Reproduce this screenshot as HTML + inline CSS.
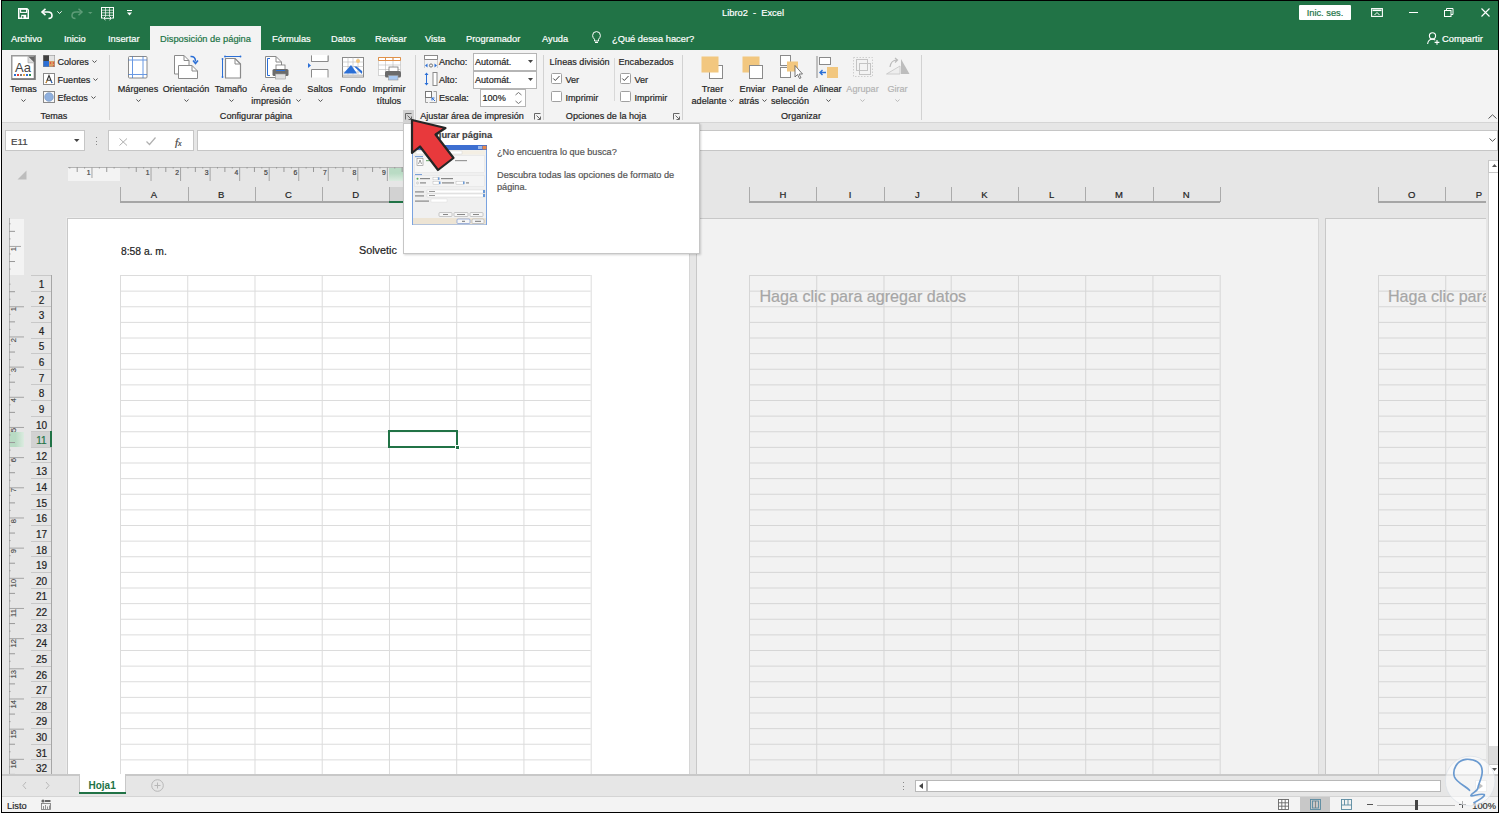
<!DOCTYPE html>
<html><head><meta charset="utf-8">
<style>
*{margin:0;padding:0;box-sizing:border-box}
html,body{width:1500px;height:813px;overflow:hidden;background:#e6e6e6;font-family:"Liberation Sans",sans-serif;color:#262626;position:relative}
.a{position:absolute}
.t{position:absolute;white-space:nowrap;-webkit-text-stroke:0.2px currentColor}
svg{position:absolute;overflow:visible}
</style></head><body>
<div class="a" style="left:0px;top:0px;width:1500px;height:50px;background:#217346;"></div>
<div class="a" style="left:150px;top:26px;width:111px;height:24px;background:#f3f3f3;"></div>
<div class="t" style="left:722.00px;top:9.00px;font-size:9.3px;line-height:9.3px;color:#fff;font-weight:normal;">Libro2&nbsp; - &nbsp;Excel</div>
<div class="t" style="left:11.00px;top:35.00px;font-size:9.3px;line-height:9.3px;color:#fff;font-weight:normal;">Archivo</div>
<div class="t" style="left:64.00px;top:35.00px;font-size:9.3px;line-height:9.3px;color:#fff;font-weight:normal;">Inicio</div>
<div class="t" style="left:108.00px;top:35.00px;font-size:9.3px;line-height:9.3px;color:#fff;font-weight:normal;">Insertar</div>
<div class="t" style="left:272.00px;top:35.00px;font-size:9.3px;line-height:9.3px;color:#fff;font-weight:normal;">Fórmulas</div>
<div class="t" style="left:331.00px;top:35.00px;font-size:9.3px;line-height:9.3px;color:#fff;font-weight:normal;">Datos</div>
<div class="t" style="left:375.00px;top:35.00px;font-size:9.3px;line-height:9.3px;color:#fff;font-weight:normal;">Revisar</div>
<div class="t" style="left:425.00px;top:35.00px;font-size:9.3px;line-height:9.3px;color:#fff;font-weight:normal;">Vista</div>
<div class="t" style="left:466.00px;top:35.00px;font-size:9.3px;line-height:9.3px;color:#fff;font-weight:normal;">Programador</div>
<div class="t" style="left:542.00px;top:35.00px;font-size:9.3px;line-height:9.3px;color:#fff;font-weight:normal;">Ayuda</div>
<div class="t" style="left:612.00px;top:35.00px;font-size:9.3px;line-height:9.3px;color:#fff;font-weight:normal;">¿Qué desea hacer?</div>
<div class="t" style="left:160.00px;top:35.00px;font-size:9.3px;line-height:9.3px;color:#217346;font-weight:normal;">Disposición de página</div>
<div class="t" style="left:1442.00px;top:35.00px;font-size:9.3px;line-height:9.3px;color:#fff;font-weight:normal;">Compartir</div>
<div class="a" style="left:0px;top:50px;width:1500px;height:72px;background:#f3f3f3;"></div>
<div class="a" style="left:0px;top:122px;width:1500px;height:1px;background:#d5d5d5;"></div>
<svg style="left:11px;top:55px;" width="25" height="25" viewBox="0 0 25 25"><rect x="0.75" y="0.75" width="23.5" height="23.5" fill="#fff" stroke="#9a9a9a" stroke-width="1.5"/><path d="M23.5 1 V24 H1" stroke="#777" stroke-width="1.5" fill="none"/><path d="M17 1.5 L23.3 7.8 L23.3 1.5 Z" fill="#666"/><path d="M17 1.5 V7.8 H23.3" fill="#ddd" stroke="#999" stroke-width="0.6"/><text x="4" y="17" font-family="Liberation Sans" font-size="13" fill="#444">Aa</text><rect x="3" y="19" width="2" height="2" fill="#2b6fd6"/><rect x="6" y="19" width="2" height="2" fill="#e0413a"/><rect x="9" y="19" width="2" height="2" fill="#7a7a7a"/><rect x="12" y="19" width="2" height="2" fill="#f0a848"/><rect x="15" y="19" width="2" height="2" fill="#2b6fd6"/><rect x="18" y="19" width="2" height="2" fill="#2a8a4a"/></svg>
<div class="t" style="left:23.50px;top:85.00px;font-size:9.1px;line-height:9.1px;color:#262626;font-weight:normal;transform:translateX(-50%);">Temas</div>
<svg style="left:21.0px;top:98.5px;" width="5" height="3" viewBox="0 0 5 3"><path d="M0.4 0.5 L2.5 2.5 L4.6 0.5" fill="none" stroke="#555" stroke-width="1"/></svg>
<svg style="left:43px;top:55px;" width="12" height="12" viewBox="0 0 12 12"><rect x="0" y="0" width="6" height="6" fill="#404040"/><rect x="6" y="0" width="6" height="6" fill="#e3e3e3"/><rect x="0" y="6" width="6" height="6" fill="#2b6fd6"/><rect x="6" y="6" width="6" height="6" fill="#d9a066"/><circle cx="7.5" cy="8" r="0.7" fill="#e03030"/><circle cx="10.5" cy="8" r="0.7" fill="#e03030"/><circle cx="10.5" cy="11" r="0.7" fill="#e03030"/><rect x="0.25" y="0.25" width="11.5" height="11.5" fill="none" stroke="#888" stroke-width="0.5"/></svg>
<div class="t" style="left:57.50px;top:58.00px;font-size:9.1px;line-height:9.1px;color:#262626;font-weight:normal;">Colores</div>
<svg style="left:91.5px;top:60.0px;" width="5" height="3" viewBox="0 0 5 3"><path d="M0.4 0.5 L2.5 2.5 L4.6 0.5" fill="none" stroke="#555" stroke-width="1"/></svg>
<svg style="left:43px;top:73px;" width="12" height="12" viewBox="0 0 12 12"><rect x="0.5" y="0.5" width="11" height="11" fill="#fff" stroke="#8a8a8a" stroke-width="1"/><path d="M3 10 L6 2.5 L9 10 M4.2 7.3 H7.8" fill="none" stroke="#333" stroke-width="1.1"/><path d="M3 10 L4 7.5" stroke="#f0a030" stroke-width="1"/><path d="M9 10 L8 7.5" stroke="#2b6fd6" stroke-width="1"/></svg>
<div class="t" style="left:57.50px;top:76.00px;font-size:9.1px;line-height:9.1px;color:#262626;font-weight:normal;">Fuentes</div>
<svg style="left:92.5px;top:78.0px;" width="5" height="3" viewBox="0 0 5 3"><path d="M0.4 0.5 L2.5 2.5 L4.6 0.5" fill="none" stroke="#555" stroke-width="1"/></svg>
<svg style="left:43px;top:91px;" width="12" height="12" viewBox="0 0 12 12"><rect x="0.5" y="0.5" width="11" height="11" fill="#f8f8f8" stroke="#8a8a8a" stroke-width="1"/><circle cx="6" cy="6" r="4.3" fill="#8fb0de" stroke="#6f90be" stroke-width="0.6"/></svg>
<div class="t" style="left:57.50px;top:94.00px;font-size:9.1px;line-height:9.1px;color:#262626;font-weight:normal;">Efectos</div>
<svg style="left:90.5px;top:96.0px;" width="5" height="3" viewBox="0 0 5 3"><path d="M0.4 0.5 L2.5 2.5 L4.6 0.5" fill="none" stroke="#555" stroke-width="1"/></svg>
<div class="t" style="left:54.00px;top:112.00px;font-size:9.1px;line-height:9.1px;color:#262626;font-weight:normal;transform:translateX(-50%);">Temas</div>
<div class="a" style="left:109px;top:55px;width:1px;height:65px;background:#d2d2d2;"></div>
<svg style="left:128px;top:56px;" width="20" height="23" viewBox="0 0 20 23"><rect x="0.5" y="0.5" width="18.5" height="21.5" fill="#fff" stroke="#8a8a8a" stroke-width="1" rx="1"/><path d="M4.5 0.5 V22 M15 0.5 V22 M0.5 4 H19 M0.5 18.5 H19" stroke="#2b6fd6" stroke-width="1" opacity="0.7"/></svg>
<div class="t" style="left:138.00px;top:85.00px;font-size:9.1px;line-height:9.1px;color:#262626;font-weight:normal;transform:translateX(-50%);">Márgenes</div>
<svg style="left:135.5px;top:98.5px;" width="5" height="3" viewBox="0 0 5 3"><path d="M0.4 0.5 L2.5 2.5 L4.6 0.5" fill="none" stroke="#555" stroke-width="1"/></svg>
<svg style="left:174px;top:55px;" width="25" height="25" viewBox="0 0 25 25"><path d="M0.5 0.5 H10 L15 5.5 V19 H0.5 Z" fill="#fff" stroke="#8a8a8a" stroke-width="1"/><path d="M4.5 10.5 H18 L23.5 16 V23.5 H4.5 Z" fill="#fff" stroke="#8a8a8a" stroke-width="1"/><path d="M18 10.5 V16 H23.5" fill="none" stroke="#8a8a8a" stroke-width="1"/><path d="M10 0.5 V5.5 H15" fill="none" stroke="#8a8a8a" stroke-width="1"/><path d="M16.5 1.5 Q21.5 1 21.5 6.5" fill="none" stroke="#2b6fd6" stroke-width="1.5"/><path d="M19 5.5 L21.5 8.5 L24 5.5" fill="none" stroke="#2b6fd6" stroke-width="1.5"/></svg>
<div class="t" style="left:186.00px;top:85.00px;font-size:9.1px;line-height:9.1px;color:#262626;font-weight:normal;transform:translateX(-50%);">Orientación</div>
<svg style="left:183.5px;top:98.5px;" width="5" height="3" viewBox="0 0 5 3"><path d="M0.4 0.5 L2.5 2.5 L4.6 0.5" fill="none" stroke="#555" stroke-width="1"/></svg>
<svg style="left:221px;top:55px;" width="22" height="24" viewBox="0 0 22 24"><path d="M4.5 3.5 H14 L19.5 9 V23 H4.5 Z" fill="#fff" stroke="#8a8a8a" stroke-width="1.2" stroke-linejoin="round"/><path d="M14 3.5 V9 H19.5" fill="none" stroke="#8a8a8a" stroke-width="1"/><path d="M4 1.5 H19.5 M1.5 4 V22" stroke="#2b6fd6" stroke-width="1"/><circle cx="4" cy="1.5" r="0.9" fill="#2b6fd6"/><circle cx="19.5" cy="1.5" r="0.9" fill="#2b6fd6"/><circle cx="1.5" cy="4" r="0.9" fill="#2b6fd6"/><circle cx="1.5" cy="22" r="0.9" fill="#2b6fd6"/></svg>
<div class="t" style="left:231.00px;top:85.00px;font-size:9.1px;line-height:9.1px;color:#262626;font-weight:normal;transform:translateX(-50%);">Tamaño</div>
<svg style="left:228.5px;top:98.5px;" width="5" height="3" viewBox="0 0 5 3"><path d="M0.4 0.5 L2.5 2.5 L4.6 0.5" fill="none" stroke="#555" stroke-width="1"/></svg>
<svg style="left:265px;top:56px;" width="25" height="24" viewBox="0 0 25 24"><path d="M0.5 0.5 H11 L16.5 6 V21.5 H0.5 Z" fill="#fff" stroke="#8a8a8a" stroke-width="1"/><path d="M11 0.5 V6 H16.5" fill="none" stroke="#8a8a8a" stroke-width="1"/><path d="M5 2.5 H2.5 V19.5 H5" fill="none" stroke="#2b6fd6" stroke-width="1"/><rect x="11" y="9" width="9" height="5" fill="#fff" stroke="#777" stroke-width="0.8"/><rect x="7.5" y="13" width="16" height="7" rx="1.5" fill="#6b6b6b"/><rect x="10.5" y="18" width="10" height="5" fill="#e0e0e0" stroke="#999" stroke-width="0.6"/><rect x="11" y="14" width="9" height="1" fill="#2b6fd6"/></svg>
<div class="t" style="left:276.50px;top:85.00px;font-size:9.1px;line-height:9.1px;color:#262626;font-weight:normal;transform:translateX(-50%);">Área de</div>
<div class="t" style="left:271.00px;top:97.00px;font-size:9.1px;line-height:9.1px;color:#262626;font-weight:normal;transform:translateX(-50%);">impresión</div>
<svg style="left:295.5px;top:99.0px;" width="5" height="3" viewBox="0 0 5 3"><path d="M0.4 0.5 L2.5 2.5 L4.6 0.5" fill="none" stroke="#555" stroke-width="1"/></svg>
<svg style="left:308px;top:55px;" width="21" height="24" viewBox="0 0 21 24"><path d="M3.5 0.5 V6.5 H20 V0.5" fill="#fff" stroke="#8a8a8a" stroke-width="1"/><path d="M3.5 22.5 V14.5 H20 V22.5" fill="#fff" stroke="#8a8a8a" stroke-width="1"/><rect x="3.5" y="0" width="16.5" height="6.5" fill="#fff"/><path d="M3.5 0.5 V6.5 H20 V0.5" fill="none" stroke="#8a8a8a" stroke-width="1"/><path d="M0 8 L3 10.5 L0 13 Z" fill="#2b6fd6"/></svg>
<div class="t" style="left:320.00px;top:85.00px;font-size:9.1px;line-height:9.1px;color:#262626;font-weight:normal;transform:translateX(-50%);">Saltos</div>
<svg style="left:317.5px;top:99.0px;" width="5" height="3" viewBox="0 0 5 3"><path d="M0.4 0.5 L2.5 2.5 L4.6 0.5" fill="none" stroke="#555" stroke-width="1"/></svg>
<svg style="left:342px;top:57px;" width="22" height="21" viewBox="0 0 22 21"><rect x="0.5" y="0.5" width="21" height="19.5" fill="#fff" stroke="#8a8a8a" stroke-width="1"/><path d="M0.5 5 H21.5 M0.5 9.5 H21.5 M0.5 15 H21.5 M6 0.5 V20 M11 0.5 V20 M16 0.5 V20" stroke="#bbb" stroke-width="0.6"/><path d="M1.5 16.5 L9 8 L15 16.5 Z" fill="#2b6fd6"/><path d="M12 9.5 L20 17 V14 L14.5 9.5 Z" fill="#2b6fd6"/><circle cx="16" cy="4" r="2" fill="#f2c77f"/><rect x="1" y="17.5" width="20" height="2.5" fill="#ccc"/></svg>
<div class="t" style="left:353.00px;top:85.00px;font-size:9.1px;line-height:9.1px;color:#262626;font-weight:normal;transform:translateX(-50%);">Fondo</div>
<svg style="left:378px;top:57px;" width="24" height="23" viewBox="0 0 24 23"><rect x="0.5" y="0.5" width="22" height="18" fill="#fff" stroke="#bbb" stroke-width="0.6"/><path d="M0.5 3.5 H22.5 M7.5 0.5 V18 M15 0.5 V18 M0.5 8 H22.5 M0.5 12.5 H22.5" stroke="#bbb" stroke-width="0.6"/><path d="M0.5 0.5 H22.5 V3.5 H0.5 Z M7.5 0.5 V3.5 M15 0.5 V3.5" fill="none" stroke="#e0924a" stroke-width="1"/><rect x="11" y="10" width="9" height="5" fill="#fff" stroke="#777" stroke-width="0.8"/><rect x="7" y="14" width="16" height="6.5" rx="1.5" fill="#6b6b6b"/><rect x="10.5" y="18.5" width="9.5" height="4.5" fill="#a8c8f0" stroke="#999" stroke-width="0.6"/></svg>
<div class="t" style="left:389.00px;top:85.00px;font-size:9.1px;line-height:9.1px;color:#262626;font-weight:normal;transform:translateX(-50%);">Imprimir</div>
<div class="t" style="left:389.00px;top:97.00px;font-size:9.1px;line-height:9.1px;color:#262626;font-weight:normal;transform:translateX(-50%);">títulos</div>
<div class="t" style="left:256.00px;top:112.00px;font-size:9.1px;line-height:9.1px;color:#262626;font-weight:normal;transform:translateX(-50%);">Configurar página</div>
<div class="a" style="left:403px;top:110px;width:11px;height:12px;background:#d2d2d2;"></div>
<svg style="left:405px;top:113px;" width="7" height="7" viewBox="0 0 7 7"><path d="M0.5 6.5 V0.5 H6.5" fill="none" stroke="#666" stroke-width="1"/><path d="M2.5 2.5 L6 6 M6.5 3.5 V6.5 H3.5" fill="none" stroke="#666" stroke-width="1"/></svg>
<div class="a" style="left:415px;top:55px;width:1px;height:65px;background:#d2d2d2;"></div>
<svg style="left:424px;top:55px;" width="14" height="14" viewBox="0 0 14 14"><rect x="0.5" y="0.5" width="13" height="4" fill="#fff" stroke="#8a8a8a" stroke-width="1"/><path d="M0.5 4.5 V13 M13.5 4.5 V13" stroke="#bbb" stroke-width="0.7"/><path d="M1 10.5 L3.5 8.5 V12.5 Z M13 10.5 L10.5 8.5 V12.5 Z" fill="#2b6fd6"/><circle cx="7" cy="10.5" r="1.6" fill="none" stroke="#555" stroke-width="0.8"/></svg>
<div class="t" style="left:439.00px;top:58.00px;font-size:9.1px;line-height:9.1px;color:#262626;font-weight:normal;">Ancho:</div>
<div class="a" style="left:473px;top:53px;width:64px;height:18px;background:#fff;border:1px solid #b5b5b5"></div>
<div class="t" style="left:475.00px;top:58.00px;font-size:9.1px;line-height:9.1px;color:#262626;font-weight:normal;">Automát.</div>
<svg style="left:528px;top:60px;" width="5" height="3" viewBox="0 0 5 3"><path d="M0 0 H5 L2.5 3 Z" fill="#444"/></svg>
<svg style="left:424px;top:72px;" width="14" height="14" viewBox="0 0 14 14"><path d="M2.5 0.5 L0.5 3 H4.5 Z M2.5 13.5 L0.5 11 H4.5 Z" fill="#2b6fd6"/><path d="M2.5 2 V12" stroke="#2b6fd6" stroke-width="1"/><rect x="9" y="0.5" width="4" height="13" fill="#fff" stroke="#8a8a8a" stroke-width="1"/></svg>
<div class="t" style="left:439.00px;top:76.00px;font-size:9.1px;line-height:9.1px;color:#262626;font-weight:normal;">Alto:</div>
<div class="a" style="left:473px;top:71px;width:64px;height:18px;background:#fff;border:1px solid #b5b5b5"></div>
<div class="t" style="left:475.00px;top:76.00px;font-size:9.1px;line-height:9.1px;color:#262626;font-weight:normal;">Automát.</div>
<svg style="left:528px;top:78px;" width="5" height="3" viewBox="0 0 5 3"><path d="M0 0 H5 L2.5 3 Z" fill="#444"/></svg>
<svg style="left:425px;top:91px;" width="12" height="12" viewBox="0 0 12 12"><rect x="0.5" y="0.5" width="6" height="6" fill="#fff" stroke="#777" stroke-width="1"/><path d="M4.5 11.5 H11.5 V0.5 H8.5" fill="none" stroke="#8a8a8a" stroke-width="0.8"/><path d="M0.5 7 V11.5 H3" fill="none" stroke="#8a8a8a" stroke-width="0.8"/><path d="M10 10 L7 7 M7 9.5 V7 H9.5" fill="none" stroke="#2b6fd6" stroke-width="1"/></svg>
<div class="t" style="left:439.00px;top:94.00px;font-size:9.1px;line-height:9.1px;color:#262626;font-weight:normal;">Escala:</div>
<div class="a" style="left:480px;top:89px;width:46px;height:18px;background:#fff;border:1px solid #b5b5b5"></div>
<div class="t" style="left:482.50px;top:94.00px;font-size:9.1px;line-height:9.1px;color:#262626;font-weight:normal;">100%</div>
<svg style="left:515px;top:92px;" width="7" height="12" viewBox="0 0 7 12"><path d="M0.5 3 L3.5 0.5 L6.5 3 M0.5 9 L3.5 11.5 L6.5 9" fill="none" stroke="#666" stroke-width="0.9"/></svg>
<div class="t" style="left:472.00px;top:112.00px;font-size:9.1px;line-height:9.1px;color:#262626;font-weight:normal;transform:translateX(-50%);">Ajustar área de impresión</div>
<svg style="left:534px;top:113px;" width="7" height="7" viewBox="0 0 7 7"><path d="M0.5 6.5 V0.5 H6.5" fill="none" stroke="#666" stroke-width="1"/><path d="M2.5 2.5 L6 6 M6.5 3.5 V6.5 H3.5" fill="none" stroke="#666" stroke-width="1"/></svg>
<div class="a" style="left:542.5px;top:55px;width:1px;height:65px;background:#d2d2d2;"></div>
<div class="t" style="left:549.50px;top:58.00px;font-size:9.1px;line-height:9.1px;color:#262626;font-weight:normal;">Líneas división</div>
<svg style="left:551px;top:73px;" width="11" height="11" viewBox="0 0 11 11"><rect x="0.5" y="0.5" width="10" height="10" rx="1" fill="#fff" stroke="#a0a0a0" stroke-width="1"/><path d="M2.3 5.5 L4.3 7.5 L8.5 3" fill="none" stroke="#444" stroke-width="1"/></svg>
<div class="t" style="left:565.50px;top:76.00px;font-size:9.1px;line-height:9.1px;color:#262626;font-weight:normal;">Ver</div>
<svg style="left:551px;top:91px;" width="11" height="11" viewBox="0 0 11 11"><rect x="0.5" y="0.5" width="10" height="10" rx="1" fill="#fff" stroke="#a0a0a0" stroke-width="1"/></svg>
<div class="t" style="left:565.50px;top:94.00px;font-size:9.1px;line-height:9.1px;color:#262626;font-weight:normal;">Imprimir</div>
<div class="a" style="left:614px;top:58px;width:1px;height:43px;background:#d8d8d8;"></div>
<div class="t" style="left:618.50px;top:58.00px;font-size:9.1px;line-height:9.1px;color:#262626;font-weight:normal;">Encabezados</div>
<svg style="left:620px;top:73px;" width="11" height="11" viewBox="0 0 11 11"><rect x="0.5" y="0.5" width="10" height="10" rx="1" fill="#fff" stroke="#a0a0a0" stroke-width="1"/><path d="M2.3 5.5 L4.3 7.5 L8.5 3" fill="none" stroke="#444" stroke-width="1"/></svg>
<div class="t" style="left:634.50px;top:76.00px;font-size:9.1px;line-height:9.1px;color:#262626;font-weight:normal;">Ver</div>
<svg style="left:620px;top:91px;" width="11" height="11" viewBox="0 0 11 11"><rect x="0.5" y="0.5" width="10" height="10" rx="1" fill="#fff" stroke="#a0a0a0" stroke-width="1"/></svg>
<div class="t" style="left:634.50px;top:94.00px;font-size:9.1px;line-height:9.1px;color:#262626;font-weight:normal;">Imprimir</div>
<div class="t" style="left:606.00px;top:112.00px;font-size:9.1px;line-height:9.1px;color:#262626;font-weight:normal;transform:translateX(-50%);">Opciones de la hoja</div>
<svg style="left:673px;top:113px;" width="7" height="7" viewBox="0 0 7 7"><path d="M0.5 6.5 V0.5 H6.5" fill="none" stroke="#666" stroke-width="1"/><path d="M2.5 2.5 L6 6 M6.5 3.5 V6.5 H3.5" fill="none" stroke="#666" stroke-width="1"/></svg>
<div class="a" style="left:682px;top:55px;width:1px;height:65px;background:#d2d2d2;"></div>
<svg style="left:701px;top:56px;" width="23" height="23" viewBox="0 0 23 23"><rect x="8.5" y="9.5" width="13" height="13" fill="#fff" stroke="#8a8a8a" stroke-width="1"/><rect x="0.5" y="0.5" width="17" height="16" fill="#f2c77f"/></svg>
<div class="t" style="left:712.50px;top:85.00px;font-size:9.1px;line-height:9.1px;color:#262626;font-weight:normal;transform:translateX(-50%);">Traer</div>
<div class="t" style="left:709.00px;top:97.00px;font-size:9.1px;line-height:9.1px;color:#262626;font-weight:normal;transform:translateX(-50%);">adelante</div>
<svg style="left:728.5px;top:99.0px;" width="5" height="3" viewBox="0 0 5 3"><path d="M0.4 0.5 L2.5 2.5 L4.6 0.5" fill="none" stroke="#555" stroke-width="1"/></svg>
<svg style="left:742px;top:56px;" width="23" height="23" viewBox="0 0 23 23"><rect x="0.5" y="0.5" width="17" height="16" fill="#f2c77f"/><rect x="7.5" y="9.5" width="13" height="13" fill="#fff" stroke="#8a8a8a" stroke-width="1"/></svg>
<div class="t" style="left:752.50px;top:85.00px;font-size:9.1px;line-height:9.1px;color:#262626;font-weight:normal;transform:translateX(-50%);">Enviar</div>
<div class="t" style="left:749.00px;top:97.00px;font-size:9.1px;line-height:9.1px;color:#262626;font-weight:normal;transform:translateX(-50%);">atrás</div>
<svg style="left:761.5px;top:99.0px;" width="5" height="3" viewBox="0 0 5 3"><path d="M0.4 0.5 L2.5 2.5 L4.6 0.5" fill="none" stroke="#555" stroke-width="1"/></svg>
<svg style="left:780px;top:55px;" width="23" height="25" viewBox="0 0 23 25"><rect x="0.5" y="0.5" width="10" height="10" fill="#fff" stroke="#8a8a8a" stroke-width="1"/><rect x="0.5" y="12.5" width="10" height="10" fill="#fff" stroke="#8a8a8a" stroke-width="1"/><rect x="7" y="6.5" width="11" height="10" fill="#f2c77f"/><path d="M15 10.5 V22 L17.5 19.5 L19.5 23.5 L21 22.8 L19 19 H22.5 Z" fill="#fff" stroke="#555" stroke-width="0.8"/></svg>
<div class="t" style="left:790.00px;top:85.00px;font-size:9.1px;line-height:9.1px;color:#262626;font-weight:normal;transform:translateX(-50%);">Panel de</div>
<div class="t" style="left:790.00px;top:97.00px;font-size:9.1px;line-height:9.1px;color:#262626;font-weight:normal;transform:translateX(-50%);">selección</div>
<svg style="left:816px;top:56px;" width="23" height="23" viewBox="0 0 23 23"><path d="M1 0 V22" stroke="#8a8a8a" stroke-width="1"/><rect x="3.5" y="1.5" width="11" height="7" fill="#fff" stroke="#8a8a8a" stroke-width="1"/><rect x="11" y="11" width="11" height="11" fill="#f2c77f"/><path d="M4 16.5 H10 M6.5 14 L4 16.5 L6.5 19" fill="none" stroke="#2b6fd6" stroke-width="1.4"/></svg>
<div class="t" style="left:827.50px;top:85.00px;font-size:9.1px;line-height:9.1px;color:#262626;font-weight:normal;transform:translateX(-50%);">Alinear</div>
<svg style="left:825.5px;top:99.0px;" width="5" height="3" viewBox="0 0 5 3"><path d="M0.4 0.5 L2.5 2.5 L4.6 0.5" fill="none" stroke="#555" stroke-width="1"/></svg>
<svg style="left:852px;top:56px;" width="22" height="23" viewBox="0 0 22 23"><rect x="1.5" y="1.5" width="19" height="19" fill="none" stroke="#c4c4c4" stroke-width="0.8" stroke-dasharray="1.5 1.5"/><rect x="4.5" y="3.5" width="11" height="11" fill="none" stroke="#c4c4c4" stroke-width="1"/><rect x="7.5" y="7.5" width="11" height="11" fill="none" stroke="#c4c4c4" stroke-width="1"/></svg>
<div class="t" style="left:862.50px;top:85.00px;font-size:9.1px;line-height:9.1px;color:#b3b3b3;font-weight:normal;transform:translateX(-50%);">Agrupar</div>
<svg style="left:860.0px;top:99.0px;" width="5" height="3" viewBox="0 0 5 3"><path d="M0.4 0.5 L2.5 2.5 L4.6 0.5" fill="none" stroke="#bbb" stroke-width="1"/></svg>
<svg style="left:886px;top:57px;" width="24" height="18" viewBox="0 0 24 18"><path d="M0.5 17 L14 9 V17 Z" fill="#eee" stroke="#c4c4c4" stroke-width="0.8"/><path d="M15 17 V2 L23.5 17 Z" fill="#bdbdbd"/><path d="M4 10 Q5 3 11 3 M9 1 L11.5 3 L9 5.5" fill="none" stroke="#bbb" stroke-width="1.2"/></svg>
<div class="t" style="left:897.50px;top:85.00px;font-size:9.1px;line-height:9.1px;color:#b3b3b3;font-weight:normal;transform:translateX(-50%);">Girar</div>
<svg style="left:895.0px;top:99.0px;" width="5" height="3" viewBox="0 0 5 3"><path d="M0.4 0.5 L2.5 2.5 L4.6 0.5" fill="none" stroke="#bbb" stroke-width="1"/></svg>
<div class="t" style="left:801.00px;top:112.00px;font-size:9.1px;line-height:9.1px;color:#262626;font-weight:normal;transform:translateX(-50%);">Organizar</div>
<div class="a" style="left:920.5px;top:55px;width:1px;height:65px;background:#d2d2d2;"></div>
<svg style="left:1488px;top:114px;" width="9" height="5" viewBox="0 0 9 5"><path d="M0.5 4.5 L4.5 0.8 L8.5 4.5" fill="none" stroke="#555" stroke-width="1"/></svg>
<svg style="left:18px;top:8px;" width="11" height="11" viewBox="0 0 11 11"><path d="M0.75 0.75 H9 L10.25 2 V10.25 H0.75 Z" fill="none" stroke="#fff" stroke-width="1.5"/><rect x="2.6" y="1.2" width="6" height="3.2" fill="none" stroke="#fff" stroke-width="1.1"/><rect x="3.2" y="6.8" width="5" height="3.4" fill="#fff"/><rect x="4.2" y="8" width="1.2" height="2.2" fill="#217346"/></svg>
<svg style="left:41px;top:8px;" width="12" height="11" viewBox="0 0 12 11"><path d="M1 4 H7 Q11 4 11 7.5 Q11 10.5 7.5 10.5" fill="none" stroke="#fff" stroke-width="1.6"/><path d="M4.5 0.8 L1 4 L4.5 7.2" fill="none" stroke="#fff" stroke-width="1.6"/></svg>
<svg style="left:57px;top:11px;" width="5" height="3" viewBox="0 0 5 3"><path d="M0.3 0.3 L2.5 2.5 L4.7 0.3" fill="none" stroke="#fff" stroke-width="0.9"/></svg>
<svg style="left:71px;top:8px;" width="12" height="11" viewBox="0 0 12 11"><path d="M11 4 H5 Q1 4 1 7.5 Q1 10.5 4.5 10.5" fill="none" stroke="#5e9c78" stroke-width="1.5"/><path d="M7.5 0.8 L11 4 L7.5 7.2" fill="none" stroke="#5e9c78" stroke-width="1.5"/></svg>
<svg style="left:88px;top:12px;" width="5" height="2" viewBox="0 0 5 2"><path d="M0 0 H4.5 L2.25 2 Z" fill="#5e9c78"/></svg>
<svg style="left:101px;top:7px;" width="13" height="13" viewBox="0 0 13 13"><rect x="0.5" y="0.5" width="12" height="10.5" fill="none" stroke="#fff" stroke-width="1"/><path d="M0.5 3.2 H12.5 M0.5 5.8 H12.5 M0.5 8.4 H12.5 M4.5 0.5 V11 M8.5 0.5 V11" stroke="#fff" stroke-width="0.7"/><rect x="2" y="9.5" width="9" height="3.5" fill="#217346"/><path d="M2.8 11.3 H10.2 M4.5 9.6 L2.6 11.3 L4.5 13 M8.5 9.6 L10.4 11.3 L8.5 13" fill="none" stroke="#fff" stroke-width="1"/></svg>
<svg style="left:127px;top:10px;" width="5" height="6" viewBox="0 0 5 6"><path d="M0 0.5 H5" stroke="#fff" stroke-width="1"/><path d="M0 2.5 H5 L2.5 5.5 Z" fill="#fff"/></svg>
<div class="a" style="left:1299px;top:5px;width:52px;height:15px;background:#fff;border-radius:1px"></div>
<div class="t" style="left:1325.00px;top:9.00px;font-size:9.3px;line-height:9.3px;color:#217346;font-weight:normal;transform:translateX(-50%);">Inic. ses.</div>
<svg style="left:1371px;top:8px;" width="12" height="9" viewBox="0 0 12 9"><rect x="0.6" y="0.6" width="10.8" height="7.8" fill="none" stroke="#fff" stroke-width="1.1"/><rect x="1.5" y="1.5" width="9" height="1.6" fill="#fff"/><path d="M3.5 7 L6 4.5 L8.5 7" fill="none" stroke="#fff" stroke-width="1"/></svg>
<div class="a" style="left:1409px;top:12px;width:9px;height:1px;background:#fff;"></div>
<svg style="left:1444px;top:8px;" width="10" height="9" viewBox="0 0 10 9"><rect x="0.5" y="2.5" width="6.5" height="6" fill="none" stroke="#fff" stroke-width="1"/><path d="M2.5 2.5 V0.5 H9 V6.5 H7" fill="none" stroke="#fff" stroke-width="1"/></svg>
<svg style="left:1481px;top:7.5px;" width="9" height="9" viewBox="0 0 9 9"><path d="M0.5 0.5 L8.5 8.5 M8.5 0.5 L0.5 8.5" stroke="#fff" stroke-width="1.1"/></svg>
<svg style="left:1427px;top:32px;" width="13" height="13" viewBox="0 0 13 13"><circle cx="5.5" cy="3.8" r="3.1" fill="none" stroke="#fff" stroke-width="1.1"/><path d="M0.6 12 Q1.2 7.3 5.5 7.3 Q7.3 7.3 8.3 8.2" fill="none" stroke="#fff" stroke-width="1.1"/><path d="M10 8 V12.8 M7.6 10.4 H12.4" stroke="#fff" stroke-width="1.1"/></svg>
<svg style="left:592px;top:31px;" width="9" height="13" viewBox="0 0 9 13"><path d="M4.5 0.6 Q8.4 0.6 8.4 4.5 Q8.4 6.5 6.5 8.3 V10 H2.5 V8.3 Q0.6 6.5 0.6 4.5 Q0.6 0.6 4.5 0.6 Z" fill="none" stroke="#fff" stroke-width="1"/><path d="M3 11.5 H6" stroke="#fff" stroke-width="1"/></svg>
<div class="a" style="left:5px;top:130px;width:80px;height:21px;background:#fff;border:1px solid #c6c6c6"></div>
<div class="t" style="left:11.00px;top:137.00px;font-size:9.8px;line-height:9.8px;color:#444;font-weight:normal;">E11</div>
<div class="a" style="left:108px;top:130px;width:86px;height:21px;background:#fff;border:1px solid #c6c6c6"></div>
<div class="a" style="left:197px;top:130px;width:1301px;height:21px;background:#fff;border:1px solid #c6c6c6"></div>
<svg style="left:74px;top:139px;" width="6" height="3" viewBox="0 0 6 3"><path d="M0 0 H5.5 L2.75 3 Z" fill="#444"/></svg>
<div class="a" style="left:96px;top:137px;width:1px;height:1px;background:#888;"></div>
<div class="a" style="left:96px;top:140.5px;width:1px;height:1px;background:#888;"></div>
<div class="a" style="left:96px;top:144px;width:1px;height:1px;background:#888;"></div>
<svg style="left:118.5px;top:137.5px;" width="9" height="8" viewBox="0 0 9 8"><path d="M0.5 0.5 L8 7.5 M8 0.5 L0.5 7.5" stroke="#b0b0b0" stroke-width="1"/></svg>
<svg style="left:146px;top:137px;" width="10" height="8" viewBox="0 0 10 8"><path d="M0.5 4.5 L3.5 7.5 L9.5 0.5" fill="none" stroke="#b0b0b0" stroke-width="1.2"/></svg>
<div class="t" style="left:175.00px;top:137.00px;font-size:11px;line-height:11px;color:#444;font-weight:normal;font-family:Liberation Serif"><i>f</i><span style="font-size:8px"><i>x</i></span></div>
<svg style="left:1489px;top:138px;" width="7" height="4" viewBox="0 0 7 4"><path d="M0.5 0.5 L3.5 3.3 L6.5 0.5" fill="none" stroke="#555" stroke-width="1"/></svg>
<svg style="left:17px;top:170px;" width="10" height="10" viewBox="0 0 10 10"><path d="M9.5 0.5 V9.5 H0.5 Z" fill="#bdbdbd"/></svg>
<div class="a" style="left:68px;top:167px;width:621px;height:1px;background:#b4b4b4;"></div>
<div class="a" style="left:68px;top:168px;width:52px;height:13px;background:#f3f3f3;"></div>
<div class="a" style="left:389px;top:168px;width:68px;height:13px;background:linear-gradient(#b9dbc4 40%,#dcebe0)"></div>
<svg style="left:0px;top:0px;" width="1" height="1" viewBox="0 0 1 1"><rect x="69.31" y="167" width="1" height="1.5" fill="#999"/><rect x="76.69" y="167" width="1" height="5" fill="#999"/><rect x="84.08" y="167" width="1" height="1.5" fill="#999"/><rect x="91.46" y="167" width="1" height="11" fill="#a4a4a4"/><rect x="98.84" y="167" width="1" height="1.5" fill="#999"/><rect x="106.23" y="167" width="1" height="5" fill="#999"/><rect x="113.61" y="167" width="1" height="1.5" fill="#999"/><rect x="128.38" y="167" width="1" height="1.5" fill="#999"/><rect x="135.77" y="167" width="1" height="5" fill="#999"/><rect x="143.16" y="167" width="1" height="1.5" fill="#999"/><rect x="150.54" y="167" width="1" height="14" fill="#a4a4a4"/><rect x="157.93" y="167" width="1" height="1.5" fill="#999"/><rect x="165.31" y="167" width="1" height="5" fill="#999"/><rect x="172.69" y="167" width="1" height="1.5" fill="#999"/><rect x="180.08" y="167" width="1" height="14" fill="#a4a4a4"/><rect x="187.47" y="167" width="1" height="1.5" fill="#999"/><rect x="194.85" y="167" width="1" height="5" fill="#999"/><rect x="202.24" y="167" width="1" height="1.5" fill="#999"/><rect x="209.62" y="167" width="1" height="14" fill="#a4a4a4"/><rect x="217.00" y="167" width="1" height="1.5" fill="#999"/><rect x="224.39" y="167" width="1" height="5" fill="#999"/><rect x="231.77" y="167" width="1" height="1.5" fill="#999"/><rect x="239.16" y="167" width="1" height="14" fill="#a4a4a4"/><rect x="246.55" y="167" width="1" height="1.5" fill="#999"/><rect x="253.93" y="167" width="1" height="5" fill="#999"/><rect x="261.31" y="167" width="1" height="1.5" fill="#999"/><rect x="268.70" y="167" width="1" height="14" fill="#a4a4a4"/><rect x="276.09" y="167" width="1" height="1.5" fill="#999"/><rect x="283.47" y="167" width="1" height="5" fill="#999"/><rect x="290.86" y="167" width="1" height="1.5" fill="#999"/><rect x="298.24" y="167" width="1" height="14" fill="#a4a4a4"/><rect x="305.62" y="167" width="1" height="1.5" fill="#999"/><rect x="313.01" y="167" width="1" height="5" fill="#999"/><rect x="320.39" y="167" width="1" height="1.5" fill="#999"/><rect x="327.78" y="167" width="1" height="14" fill="#a4a4a4"/><rect x="335.16" y="167" width="1" height="1.5" fill="#999"/><rect x="342.55" y="167" width="1" height="5" fill="#999"/><rect x="349.94" y="167" width="1" height="1.5" fill="#999"/><rect x="357.32" y="167" width="1" height="14" fill="#a4a4a4"/><rect x="364.70" y="167" width="1" height="1.5" fill="#999"/><rect x="372.09" y="167" width="1" height="5" fill="#999"/><rect x="379.47" y="167" width="1" height="1.5" fill="#999"/><rect x="386.86" y="167" width="1" height="14" fill="#a4a4a4"/><rect x="394.25" y="167" width="1" height="1.5" fill="#999"/><rect x="401.63" y="167" width="1" height="5" fill="#999"/><rect x="409.01" y="167" width="1" height="1.5" fill="#999"/><rect x="416.40" y="167" width="1" height="14" fill="#a4a4a4"/><rect x="423.78" y="167" width="1" height="1.5" fill="#999"/><rect x="431.17" y="167" width="1" height="5" fill="#999"/><rect x="438.56" y="167" width="1" height="1.5" fill="#999"/><rect x="445.94" y="167" width="1" height="14" fill="#a4a4a4"/><rect x="453.32" y="167" width="1" height="1.5" fill="#999"/><rect x="460.71" y="167" width="1" height="5" fill="#999"/><rect x="468.09" y="167" width="1" height="1.5" fill="#999"/><rect x="475.48" y="167" width="1" height="14" fill="#a4a4a4"/><rect x="482.87" y="167" width="1" height="1.5" fill="#999"/><rect x="490.25" y="167" width="1" height="5" fill="#999"/><rect x="497.63" y="167" width="1" height="1.5" fill="#999"/><rect x="505.02" y="167" width="1" height="14" fill="#a4a4a4"/><rect x="512.40" y="167" width="1" height="1.5" fill="#999"/><rect x="519.79" y="167" width="1" height="5" fill="#999"/><rect x="527.17" y="167" width="1" height="1.5" fill="#999"/><rect x="534.56" y="167" width="1" height="14" fill="#a4a4a4"/><rect x="541.94" y="167" width="1" height="1.5" fill="#999"/><rect x="549.33" y="167" width="1" height="5" fill="#999"/><rect x="556.71" y="167" width="1" height="1.5" fill="#999"/><rect x="564.10" y="167" width="1" height="14" fill="#a4a4a4"/><rect x="571.49" y="167" width="1" height="1.5" fill="#999"/><rect x="578.87" y="167" width="1" height="5" fill="#999"/><rect x="586.25" y="167" width="1" height="1.5" fill="#999"/><rect x="593.64" y="167" width="1" height="14" fill="#a4a4a4"/><rect x="601.02" y="167" width="1" height="1.5" fill="#999"/><rect x="608.41" y="167" width="1" height="5" fill="#999"/><rect x="615.79" y="167" width="1" height="1.5" fill="#999"/><rect x="623.18" y="167" width="1" height="14" fill="#a4a4a4"/><rect x="630.57" y="167" width="1" height="1.5" fill="#999"/><rect x="637.95" y="167" width="1" height="5" fill="#999"/><rect x="645.34" y="167" width="1" height="1.5" fill="#999"/><rect x="652.72" y="167" width="1" height="14" fill="#a4a4a4"/><rect x="660.11" y="167" width="1" height="1.5" fill="#999"/><rect x="667.49" y="167" width="1" height="5" fill="#999"/><rect x="674.88" y="167" width="1" height="1.5" fill="#999"/><rect x="682.26" y="167" width="1" height="14" fill="#a4a4a4"/></svg>
<div class="t" style="left:90.46px;top:170.00px;font-size:6.8px;line-height:6.8px;color:#444;font-weight:normal;transform:translateX(-100%);">1</div>
<div class="t" style="left:149.54px;top:170.00px;font-size:6.8px;line-height:6.8px;color:#444;font-weight:normal;transform:translateX(-100%);">1</div>
<div class="t" style="left:179.08px;top:170.00px;font-size:6.8px;line-height:6.8px;color:#444;font-weight:normal;transform:translateX(-100%);">2</div>
<div class="t" style="left:208.62px;top:170.00px;font-size:6.8px;line-height:6.8px;color:#444;font-weight:normal;transform:translateX(-100%);">3</div>
<div class="t" style="left:238.16px;top:170.00px;font-size:6.8px;line-height:6.8px;color:#444;font-weight:normal;transform:translateX(-100%);">4</div>
<div class="t" style="left:267.70px;top:170.00px;font-size:6.8px;line-height:6.8px;color:#444;font-weight:normal;transform:translateX(-100%);">5</div>
<div class="t" style="left:297.24px;top:170.00px;font-size:6.8px;line-height:6.8px;color:#444;font-weight:normal;transform:translateX(-100%);">6</div>
<div class="t" style="left:326.78px;top:170.00px;font-size:6.8px;line-height:6.8px;color:#444;font-weight:normal;transform:translateX(-100%);">7</div>
<div class="t" style="left:356.32px;top:170.00px;font-size:6.8px;line-height:6.8px;color:#444;font-weight:normal;transform:translateX(-100%);">8</div>
<div class="t" style="left:385.86px;top:170.00px;font-size:6.8px;line-height:6.8px;color:#444;font-weight:normal;transform:translateX(-100%);">9</div>
<div class="t" style="left:415.40px;top:170.00px;font-size:6.8px;line-height:6.8px;color:#444;font-weight:normal;transform:translateX(-100%);">10</div>
<div class="t" style="left:444.94px;top:170.00px;font-size:6.8px;line-height:6.8px;color:#444;font-weight:normal;transform:translateX(-100%);">11</div>
<div class="t" style="left:474.48px;top:170.00px;font-size:6.8px;line-height:6.8px;color:#444;font-weight:normal;transform:translateX(-100%);">12</div>
<div class="t" style="left:504.02px;top:170.00px;font-size:6.8px;line-height:6.8px;color:#444;font-weight:normal;transform:translateX(-100%);">13</div>
<div class="t" style="left:533.56px;top:170.00px;font-size:6.8px;line-height:6.8px;color:#444;font-weight:normal;transform:translateX(-100%);">14</div>
<div class="t" style="left:563.10px;top:170.00px;font-size:6.8px;line-height:6.8px;color:#444;font-weight:normal;transform:translateX(-100%);">15</div>
<div class="t" style="left:592.64px;top:170.00px;font-size:6.8px;line-height:6.8px;color:#444;font-weight:normal;transform:translateX(-100%);">16</div>
<div class="t" style="left:622.18px;top:170.00px;font-size:6.8px;line-height:6.8px;color:#444;font-weight:normal;transform:translateX(-100%);">17</div>
<div class="t" style="left:651.72px;top:170.00px;font-size:6.8px;line-height:6.8px;color:#444;font-weight:normal;transform:translateX(-100%);">18</div>
<div class="t" style="left:681.26px;top:170.00px;font-size:6.8px;line-height:6.8px;color:#444;font-weight:normal;transform:translateX(-100%);">19</div>
<div class="t" style="left:153.92px;top:190.00px;font-size:9.5px;line-height:9.5px;color:#222;font-weight:normal;transform:translateX(-50%);">A</div>
<div class="a" style="left:120px;top:187px;width:1px;height:15px;background:#ababab;"></div>
<div class="t" style="left:221.16px;top:190.00px;font-size:9.5px;line-height:9.5px;color:#222;font-weight:normal;transform:translateX(-50%);">B</div>
<div class="a" style="left:188px;top:187px;width:1px;height:15px;background:#ababab;"></div>
<div class="t" style="left:288.40px;top:190.00px;font-size:9.5px;line-height:9.5px;color:#222;font-weight:normal;transform:translateX(-50%);">C</div>
<div class="a" style="left:255px;top:187px;width:1px;height:15px;background:#ababab;"></div>
<div class="t" style="left:355.64px;top:190.00px;font-size:9.5px;line-height:9.5px;color:#222;font-weight:normal;transform:translateX(-50%);">D</div>
<div class="a" style="left:322px;top:187px;width:1px;height:15px;background:#ababab;"></div>
<div class="a" style="left:389px;top:187px;width:67px;height:15px;background:#d2d2d2;"></div>
<div class="a" style="left:389px;top:201px;width:67px;height:2px;background:#217346;"></div>
<div class="t" style="left:422.88px;top:190.00px;font-size:9.5px;line-height:9.5px;color:#222;font-weight:normal;transform:translateX(-50%);">E</div>
<div class="a" style="left:389px;top:187px;width:1px;height:15px;background:#ababab;"></div>
<div class="t" style="left:490.12px;top:190.00px;font-size:9.5px;line-height:9.5px;color:#222;font-weight:normal;transform:translateX(-50%);">F</div>
<div class="a" style="left:456px;top:187px;width:1px;height:15px;background:#ababab;"></div>
<div class="t" style="left:557.36px;top:190.00px;font-size:9.5px;line-height:9.5px;color:#222;font-weight:normal;transform:translateX(-50%);">G</div>
<div class="a" style="left:524px;top:187px;width:1px;height:15px;background:#ababab;"></div>
<div class="a" style="left:120px;top:201px;width:471px;height:1.6px;background:#a6a6a6;"></div>
<div class="a" style="left:591px;top:187px;width:1px;height:15px;background:#ababab;"></div>
<div class="a" style="left:389px;top:201px;width:68px;height:2px;background:#217346;"></div>
<div class="t" style="left:782.82px;top:190.00px;font-size:9.5px;line-height:9.5px;color:#222;font-weight:normal;transform:translateX(-50%);">H</div>
<div class="a" style="left:749px;top:187px;width:1px;height:15px;background:#ababab;"></div>
<div class="t" style="left:850.06px;top:190.00px;font-size:9.5px;line-height:9.5px;color:#222;font-weight:normal;transform:translateX(-50%);">I</div>
<div class="a" style="left:816px;top:187px;width:1px;height:15px;background:#ababab;"></div>
<div class="t" style="left:917.30px;top:190.00px;font-size:9.5px;line-height:9.5px;color:#222;font-weight:normal;transform:translateX(-50%);">J</div>
<div class="a" style="left:884px;top:187px;width:1px;height:15px;background:#ababab;"></div>
<div class="t" style="left:984.54px;top:190.00px;font-size:9.5px;line-height:9.5px;color:#222;font-weight:normal;transform:translateX(-50%);">K</div>
<div class="a" style="left:951px;top:187px;width:1px;height:15px;background:#ababab;"></div>
<div class="t" style="left:1051.78px;top:190.00px;font-size:9.5px;line-height:9.5px;color:#222;font-weight:normal;transform:translateX(-50%);">L</div>
<div class="a" style="left:1018px;top:187px;width:1px;height:15px;background:#ababab;"></div>
<div class="t" style="left:1119.02px;top:190.00px;font-size:9.5px;line-height:9.5px;color:#222;font-weight:normal;transform:translateX(-50%);">M</div>
<div class="a" style="left:1085px;top:187px;width:1px;height:15px;background:#ababab;"></div>
<div class="t" style="left:1186.26px;top:190.00px;font-size:9.5px;line-height:9.5px;color:#222;font-weight:normal;transform:translateX(-50%);">N</div>
<div class="a" style="left:1153px;top:187px;width:1px;height:15px;background:#ababab;"></div>
<div class="a" style="left:749px;top:201px;width:471px;height:1.6px;background:#a6a6a6;"></div>
<div class="a" style="left:1220px;top:187px;width:1px;height:15px;background:#ababab;"></div>
<div class="a" style="left:1378px;top:186px;width:108px;height:17px;overflow:hidden">
</div>
<div class="a" style="left:1378px;top:187px;width:1px;height:15px;background:#ababab;"></div>
<div class="a" style="left:1445px;top:187px;width:1px;height:15px;background:#ababab;"></div>
<div class="a" style="left:1378px;top:201px;width:108px;height:1.6px;background:#a6a6a6;"></div>
<div class="t" style="left:1411.62px;top:190.00px;font-size:9.5px;line-height:9.5px;color:#222;font-weight:normal;transform:translateX(-50%);">O</div>
<div class="t" style="left:1479.00px;top:190.00px;font-size:9.5px;line-height:9.5px;color:#222;font-weight:normal;transform:translateX(-50%);">P</div>
<div class="a" style="left:9px;top:218px;width:1px;height:557px;background:#b4b4b4;"></div>
<div class="a" style="left:10px;top:219px;width:14px;height:56px;background:#f3f3f3;"></div>
<div class="a" style="left:10px;top:432px;width:14px;height:15px;background:linear-gradient(90deg,#b9dbc4 40%,#dcebe0)"></div>
<svg style="left:0px;top:0px;" width="1" height="1" viewBox="0 0 1 1"><rect x="9" y="223.30" width="1.5" height="1" fill="#999"/><rect x="9" y="230.85" width="6" height="1" fill="#999"/><rect x="9" y="238.39" width="1.5" height="1" fill="#999"/><rect x="9" y="245.93" width="12" height="1" fill="#a4a4a4"/><rect x="9" y="253.47" width="1.5" height="1" fill="#999"/><rect x="9" y="261.02" width="6" height="1" fill="#999"/><rect x="9" y="268.56" width="1.5" height="1" fill="#999"/><rect x="9" y="283.64" width="1.5" height="1" fill="#999"/><rect x="9" y="291.19" width="6" height="1" fill="#999"/><rect x="9" y="298.73" width="1.5" height="1" fill="#999"/><rect x="9" y="306.27" width="15" height="1" fill="#a4a4a4"/><rect x="9" y="313.81" width="1.5" height="1" fill="#999"/><rect x="9" y="321.36" width="6" height="1" fill="#999"/><rect x="9" y="328.90" width="1.5" height="1" fill="#999"/><rect x="9" y="336.44" width="15" height="1" fill="#a4a4a4"/><rect x="9" y="343.98" width="1.5" height="1" fill="#999"/><rect x="9" y="351.53" width="6" height="1" fill="#999"/><rect x="9" y="359.07" width="1.5" height="1" fill="#999"/><rect x="9" y="366.61" width="15" height="1" fill="#a4a4a4"/><rect x="9" y="374.15" width="1.5" height="1" fill="#999"/><rect x="9" y="381.70" width="6" height="1" fill="#999"/><rect x="9" y="389.24" width="1.5" height="1" fill="#999"/><rect x="9" y="396.78" width="15" height="1" fill="#a4a4a4"/><rect x="9" y="404.32" width="1.5" height="1" fill="#999"/><rect x="9" y="411.87" width="6" height="1" fill="#999"/><rect x="9" y="419.41" width="1.5" height="1" fill="#999"/><rect x="9" y="426.95" width="15" height="1" fill="#a4a4a4"/><rect x="9" y="434.49" width="1.5" height="1" fill="#999"/><rect x="9" y="442.04" width="6" height="1" fill="#999"/><rect x="9" y="449.58" width="1.5" height="1" fill="#999"/><rect x="9" y="457.12" width="15" height="1" fill="#a4a4a4"/><rect x="9" y="464.66" width="1.5" height="1" fill="#999"/><rect x="9" y="472.21" width="6" height="1" fill="#999"/><rect x="9" y="479.75" width="1.5" height="1" fill="#999"/><rect x="9" y="487.29" width="15" height="1" fill="#a4a4a4"/><rect x="9" y="494.83" width="1.5" height="1" fill="#999"/><rect x="9" y="502.38" width="6" height="1" fill="#999"/><rect x="9" y="509.92" width="1.5" height="1" fill="#999"/><rect x="9" y="517.46" width="15" height="1" fill="#a4a4a4"/><rect x="9" y="525.00" width="1.5" height="1" fill="#999"/><rect x="9" y="532.55" width="6" height="1" fill="#999"/><rect x="9" y="540.09" width="1.5" height="1" fill="#999"/><rect x="9" y="547.63" width="15" height="1" fill="#a4a4a4"/><rect x="9" y="555.17" width="1.5" height="1" fill="#999"/><rect x="9" y="562.72" width="6" height="1" fill="#999"/><rect x="9" y="570.26" width="1.5" height="1" fill="#999"/><rect x="9" y="577.80" width="15" height="1" fill="#a4a4a4"/><rect x="9" y="585.34" width="1.5" height="1" fill="#999"/><rect x="9" y="592.88" width="6" height="1" fill="#999"/><rect x="9" y="600.43" width="1.5" height="1" fill="#999"/><rect x="9" y="607.97" width="15" height="1" fill="#a4a4a4"/><rect x="9" y="615.51" width="1.5" height="1" fill="#999"/><rect x="9" y="623.06" width="6" height="1" fill="#999"/><rect x="9" y="630.60" width="1.5" height="1" fill="#999"/><rect x="9" y="638.14" width="15" height="1" fill="#a4a4a4"/><rect x="9" y="645.68" width="1.5" height="1" fill="#999"/><rect x="9" y="653.23" width="6" height="1" fill="#999"/><rect x="9" y="660.77" width="1.5" height="1" fill="#999"/><rect x="9" y="668.31" width="15" height="1" fill="#a4a4a4"/><rect x="9" y="675.85" width="1.5" height="1" fill="#999"/><rect x="9" y="683.39" width="6" height="1" fill="#999"/><rect x="9" y="690.94" width="1.5" height="1" fill="#999"/><rect x="9" y="698.48" width="15" height="1" fill="#a4a4a4"/><rect x="9" y="706.02" width="1.5" height="1" fill="#999"/><rect x="9" y="713.57" width="6" height="1" fill="#999"/><rect x="9" y="721.11" width="1.5" height="1" fill="#999"/><rect x="9" y="728.65" width="15" height="1" fill="#a4a4a4"/><rect x="9" y="736.19" width="1.5" height="1" fill="#999"/><rect x="9" y="743.74" width="6" height="1" fill="#999"/><rect x="9" y="751.28" width="1.5" height="1" fill="#999"/><rect x="9" y="758.82" width="15" height="1" fill="#a4a4a4"/><rect x="9" y="766.36" width="1.5" height="1" fill="#999"/><rect x="9" y="773.90" width="6" height="1" fill="#999"/></svg>
<div class="t" style="left:10px;top:247.13px;font-size:7.6px;line-height:7px;color:#444;transform-origin:0 0;transform:rotate(-90deg) translate(-100%,0);-webkit-text-stroke:0.1px #444">1</div>
<div class="t" style="left:10px;top:307.47px;font-size:7.6px;line-height:7px;color:#444;transform-origin:0 0;transform:rotate(-90deg) translate(-100%,0);-webkit-text-stroke:0.1px #444">1</div>
<div class="t" style="left:10px;top:337.64px;font-size:7.6px;line-height:7px;color:#444;transform-origin:0 0;transform:rotate(-90deg) translate(-100%,0);-webkit-text-stroke:0.1px #444">2</div>
<div class="t" style="left:10px;top:367.81px;font-size:7.6px;line-height:7px;color:#444;transform-origin:0 0;transform:rotate(-90deg) translate(-100%,0);-webkit-text-stroke:0.1px #444">3</div>
<div class="t" style="left:10px;top:397.98px;font-size:7.6px;line-height:7px;color:#444;transform-origin:0 0;transform:rotate(-90deg) translate(-100%,0);-webkit-text-stroke:0.1px #444">4</div>
<div class="t" style="left:10px;top:428.15px;font-size:7.6px;line-height:7px;color:#444;transform-origin:0 0;transform:rotate(-90deg) translate(-100%,0);-webkit-text-stroke:0.1px #444">5</div>
<div class="t" style="left:10px;top:458.32px;font-size:7.6px;line-height:7px;color:#444;transform-origin:0 0;transform:rotate(-90deg) translate(-100%,0);-webkit-text-stroke:0.1px #444">6</div>
<div class="t" style="left:10px;top:488.49px;font-size:7.6px;line-height:7px;color:#444;transform-origin:0 0;transform:rotate(-90deg) translate(-100%,0);-webkit-text-stroke:0.1px #444">7</div>
<div class="t" style="left:10px;top:518.66px;font-size:7.6px;line-height:7px;color:#444;transform-origin:0 0;transform:rotate(-90deg) translate(-100%,0);-webkit-text-stroke:0.1px #444">8</div>
<div class="t" style="left:10px;top:548.83px;font-size:7.6px;line-height:7px;color:#444;transform-origin:0 0;transform:rotate(-90deg) translate(-100%,0);-webkit-text-stroke:0.1px #444">9</div>
<div class="t" style="left:10px;top:579.00px;font-size:7.6px;line-height:7px;color:#444;transform-origin:0 0;transform:rotate(-90deg) translate(-100%,0);-webkit-text-stroke:0.1px #444">10</div>
<div class="t" style="left:10px;top:609.17px;font-size:7.6px;line-height:7px;color:#444;transform-origin:0 0;transform:rotate(-90deg) translate(-100%,0);-webkit-text-stroke:0.1px #444">11</div>
<div class="t" style="left:10px;top:639.34px;font-size:7.6px;line-height:7px;color:#444;transform-origin:0 0;transform:rotate(-90deg) translate(-100%,0);-webkit-text-stroke:0.1px #444">12</div>
<div class="t" style="left:10px;top:669.51px;font-size:7.6px;line-height:7px;color:#444;transform-origin:0 0;transform:rotate(-90deg) translate(-100%,0);-webkit-text-stroke:0.1px #444">13</div>
<div class="t" style="left:10px;top:699.68px;font-size:7.6px;line-height:7px;color:#444;transform-origin:0 0;transform:rotate(-90deg) translate(-100%,0);-webkit-text-stroke:0.1px #444">14</div>
<div class="t" style="left:10px;top:729.85px;font-size:7.6px;line-height:7px;color:#444;transform-origin:0 0;transform:rotate(-90deg) translate(-100%,0);-webkit-text-stroke:0.1px #444">15</div>
<div class="t" style="left:10px;top:760.02px;font-size:7.6px;line-height:7px;color:#444;transform-origin:0 0;transform:rotate(-90deg) translate(-100%,0);-webkit-text-stroke:0.1px #444">16</div>
<div class="a" style="left:31px;top:275px;width:20px;height:1px;background:#c8c8c8;"></div>
<div class="t" style="left:41.50px;top:280.00px;font-size:10px;line-height:10px;color:#222;font-weight:normal;transform:translateX(-50%);">1</div>
<div class="a" style="left:31px;top:291px;width:20px;height:1px;background:#c8c8c8;"></div>
<div class="t" style="left:41.50px;top:296.00px;font-size:10px;line-height:10px;color:#222;font-weight:normal;transform:translateX(-50%);">2</div>
<div class="a" style="left:31px;top:306px;width:20px;height:1px;background:#c8c8c8;"></div>
<div class="t" style="left:41.50px;top:311.00px;font-size:10px;line-height:10px;color:#222;font-weight:normal;transform:translateX(-50%);">3</div>
<div class="a" style="left:31px;top:322px;width:20px;height:1px;background:#c8c8c8;"></div>
<div class="t" style="left:41.50px;top:327.00px;font-size:10px;line-height:10px;color:#222;font-weight:normal;transform:translateX(-50%);">4</div>
<div class="a" style="left:31px;top:338px;width:20px;height:1px;background:#c8c8c8;"></div>
<div class="t" style="left:41.50px;top:342.00px;font-size:10px;line-height:10px;color:#222;font-weight:normal;transform:translateX(-50%);">5</div>
<div class="a" style="left:31px;top:353px;width:20px;height:1px;background:#c8c8c8;"></div>
<div class="t" style="left:41.50px;top:358.00px;font-size:10px;line-height:10px;color:#222;font-weight:normal;transform:translateX(-50%);">6</div>
<div class="a" style="left:31px;top:369px;width:20px;height:1px;background:#c8c8c8;"></div>
<div class="t" style="left:41.50px;top:374.00px;font-size:10px;line-height:10px;color:#222;font-weight:normal;transform:translateX(-50%);">7</div>
<div class="a" style="left:31px;top:384px;width:20px;height:1px;background:#c8c8c8;"></div>
<div class="t" style="left:41.50px;top:389.00px;font-size:10px;line-height:10px;color:#222;font-weight:normal;transform:translateX(-50%);">8</div>
<div class="a" style="left:31px;top:400px;width:20px;height:1px;background:#c8c8c8;"></div>
<div class="t" style="left:41.50px;top:405.00px;font-size:10px;line-height:10px;color:#222;font-weight:normal;transform:translateX(-50%);">9</div>
<div class="a" style="left:31px;top:416px;width:20px;height:1px;background:#c8c8c8;"></div>
<div class="t" style="left:41.50px;top:421.00px;font-size:10px;line-height:10px;color:#222;font-weight:normal;transform:translateX(-50%);">10</div>
<div class="a" style="left:31px;top:431px;width:20px;height:16px;background:#d2d2d2;"></div>
<div class="a" style="left:31px;top:431px;width:20px;height:1px;background:#c8c8c8;"></div>
<div class="t" style="left:41.50px;top:436.00px;font-size:10px;line-height:10px;color:#217346;font-weight:normal;transform:translateX(-50%);">11</div>
<div class="a" style="left:31px;top:447px;width:20px;height:1px;background:#c8c8c8;"></div>
<div class="t" style="left:41.50px;top:452.00px;font-size:10px;line-height:10px;color:#222;font-weight:normal;transform:translateX(-50%);">12</div>
<div class="a" style="left:31px;top:462px;width:20px;height:1px;background:#c8c8c8;"></div>
<div class="t" style="left:41.50px;top:467.00px;font-size:10px;line-height:10px;color:#222;font-weight:normal;transform:translateX(-50%);">13</div>
<div class="a" style="left:31px;top:478px;width:20px;height:1px;background:#c8c8c8;"></div>
<div class="t" style="left:41.50px;top:483.00px;font-size:10px;line-height:10px;color:#222;font-weight:normal;transform:translateX(-50%);">14</div>
<div class="a" style="left:31px;top:494px;width:20px;height:1px;background:#c8c8c8;"></div>
<div class="t" style="left:41.50px;top:499.00px;font-size:10px;line-height:10px;color:#222;font-weight:normal;transform:translateX(-50%);">15</div>
<div class="a" style="left:31px;top:509px;width:20px;height:1px;background:#c8c8c8;"></div>
<div class="t" style="left:41.50px;top:514.00px;font-size:10px;line-height:10px;color:#222;font-weight:normal;transform:translateX(-50%);">16</div>
<div class="a" style="left:31px;top:525px;width:20px;height:1px;background:#c8c8c8;"></div>
<div class="t" style="left:41.50px;top:530.00px;font-size:10px;line-height:10px;color:#222;font-weight:normal;transform:translateX(-50%);">17</div>
<div class="a" style="left:31px;top:541px;width:20px;height:1px;background:#c8c8c8;"></div>
<div class="t" style="left:41.50px;top:546.00px;font-size:10px;line-height:10px;color:#222;font-weight:normal;transform:translateX(-50%);">18</div>
<div class="a" style="left:31px;top:556px;width:20px;height:1px;background:#c8c8c8;"></div>
<div class="t" style="left:41.50px;top:561.00px;font-size:10px;line-height:10px;color:#222;font-weight:normal;transform:translateX(-50%);">19</div>
<div class="a" style="left:31px;top:572px;width:20px;height:1px;background:#c8c8c8;"></div>
<div class="t" style="left:41.50px;top:577.00px;font-size:10px;line-height:10px;color:#222;font-weight:normal;transform:translateX(-50%);">20</div>
<div class="a" style="left:31px;top:588px;width:20px;height:1px;background:#c8c8c8;"></div>
<div class="t" style="left:41.50px;top:592.00px;font-size:10px;line-height:10px;color:#222;font-weight:normal;transform:translateX(-50%);">21</div>
<div class="a" style="left:31px;top:603px;width:20px;height:1px;background:#c8c8c8;"></div>
<div class="t" style="left:41.50px;top:608.00px;font-size:10px;line-height:10px;color:#222;font-weight:normal;transform:translateX(-50%);">22</div>
<div class="a" style="left:31px;top:619px;width:20px;height:1px;background:#c8c8c8;"></div>
<div class="t" style="left:41.50px;top:624.00px;font-size:10px;line-height:10px;color:#222;font-weight:normal;transform:translateX(-50%);">23</div>
<div class="a" style="left:31px;top:634px;width:20px;height:1px;background:#c8c8c8;"></div>
<div class="t" style="left:41.50px;top:639.00px;font-size:10px;line-height:10px;color:#222;font-weight:normal;transform:translateX(-50%);">24</div>
<div class="a" style="left:31px;top:650px;width:20px;height:1px;background:#c8c8c8;"></div>
<div class="t" style="left:41.50px;top:655.00px;font-size:10px;line-height:10px;color:#222;font-weight:normal;transform:translateX(-50%);">25</div>
<div class="a" style="left:31px;top:666px;width:20px;height:1px;background:#c8c8c8;"></div>
<div class="t" style="left:41.50px;top:671.00px;font-size:10px;line-height:10px;color:#222;font-weight:normal;transform:translateX(-50%);">26</div>
<div class="a" style="left:31px;top:681px;width:20px;height:1px;background:#c8c8c8;"></div>
<div class="t" style="left:41.50px;top:686.00px;font-size:10px;line-height:10px;color:#222;font-weight:normal;transform:translateX(-50%);">27</div>
<div class="a" style="left:31px;top:697px;width:20px;height:1px;background:#c8c8c8;"></div>
<div class="t" style="left:41.50px;top:702.00px;font-size:10px;line-height:10px;color:#222;font-weight:normal;transform:translateX(-50%);">28</div>
<div class="a" style="left:31px;top:712px;width:20px;height:1px;background:#c8c8c8;"></div>
<div class="t" style="left:41.50px;top:717.00px;font-size:10px;line-height:10px;color:#222;font-weight:normal;transform:translateX(-50%);">29</div>
<div class="a" style="left:31px;top:728px;width:20px;height:1px;background:#c8c8c8;"></div>
<div class="t" style="left:41.50px;top:733.00px;font-size:10px;line-height:10px;color:#222;font-weight:normal;transform:translateX(-50%);">30</div>
<div class="a" style="left:31px;top:744px;width:20px;height:1px;background:#c8c8c8;"></div>
<div class="t" style="left:41.50px;top:749.00px;font-size:10px;line-height:10px;color:#222;font-weight:normal;transform:translateX(-50%);">31</div>
<div class="a" style="left:31px;top:759px;width:20px;height:1px;background:#c8c8c8;"></div>
<div class="t" style="left:41.50px;top:764.00px;font-size:10px;line-height:10px;color:#222;font-weight:normal;transform:translateX(-50%);">32</div>
<div class="a" style="left:51px;top:275px;width:1px;height:500px;background:#a6a6a6;"></div>
<div class="a" style="left:50px;top:431px;width:2px;height:16px;background:#217346;"></div>
<div class="a" style="left:67px;top:218px;width:623px;height:557px;background:#fff;border:1px solid #c8c8c8;border-bottom:0;box-shadow:0 0 0 1px #ebebeb"></div>
<div class="a" style="left:689px;top:218px;width:7px;height:557px;background:#e6e6e6;border-left:1px solid #d6d6d6"></div>
<div class="a" style="left:696px;top:218px;width:623px;height:557px;background:#f2f2f2;border:1px solid #c8c8c8;border-bottom:0"></div>
<div class="a" style="left:1318px;top:218px;width:7px;height:557px;background:#e6e6e6;border-left:1px solid #d6d6d6"></div>
<div class="a" style="left:1325px;top:218px;width:161px;height:557px;background:#f2f2f2;border-left:1px solid #c8c8c8;border-top:1px solid #c8c8c8"></div>
<svg style="left:120.3px;top:275.0px;" width="470.67999999999995" height="500" viewBox="0 0 470.67999999999995 500"><rect x="0" y="0.00" width="470.68" height="1" fill="#dcdcdc"/><rect x="0" y="15.62" width="470.68" height="1" fill="#dcdcdc"/><rect x="0" y="31.25" width="470.68" height="1" fill="#dcdcdc"/><rect x="0" y="46.88" width="470.68" height="1" fill="#dcdcdc"/><rect x="0" y="62.50" width="470.68" height="1" fill="#dcdcdc"/><rect x="0" y="78.12" width="470.68" height="1" fill="#dcdcdc"/><rect x="0" y="93.75" width="470.68" height="1" fill="#dcdcdc"/><rect x="0" y="109.38" width="470.68" height="1" fill="#dcdcdc"/><rect x="0" y="125.00" width="470.68" height="1" fill="#dcdcdc"/><rect x="0" y="140.62" width="470.68" height="1" fill="#dcdcdc"/><rect x="0" y="156.25" width="470.68" height="1" fill="#dcdcdc"/><rect x="0" y="171.88" width="470.68" height="1" fill="#dcdcdc"/><rect x="0" y="187.50" width="470.68" height="1" fill="#dcdcdc"/><rect x="0" y="203.12" width="470.68" height="1" fill="#dcdcdc"/><rect x="0" y="218.75" width="470.68" height="1" fill="#dcdcdc"/><rect x="0" y="234.38" width="470.68" height="1" fill="#dcdcdc"/><rect x="0" y="250.00" width="470.68" height="1" fill="#dcdcdc"/><rect x="0" y="265.62" width="470.68" height="1" fill="#dcdcdc"/><rect x="0" y="281.25" width="470.68" height="1" fill="#dcdcdc"/><rect x="0" y="296.88" width="470.68" height="1" fill="#dcdcdc"/><rect x="0" y="312.50" width="470.68" height="1" fill="#dcdcdc"/><rect x="0" y="328.12" width="470.68" height="1" fill="#dcdcdc"/><rect x="0" y="343.75" width="470.68" height="1" fill="#dcdcdc"/><rect x="0" y="359.38" width="470.68" height="1" fill="#dcdcdc"/><rect x="0" y="375.00" width="470.68" height="1" fill="#dcdcdc"/><rect x="0" y="390.62" width="470.68" height="1" fill="#dcdcdc"/><rect x="0" y="406.25" width="470.68" height="1" fill="#dcdcdc"/><rect x="0" y="421.88" width="470.68" height="1" fill="#dcdcdc"/><rect x="0" y="437.50" width="470.68" height="1" fill="#dcdcdc"/><rect x="0" y="453.12" width="470.68" height="1" fill="#dcdcdc"/><rect x="0" y="468.75" width="470.68" height="1" fill="#dcdcdc"/><rect x="0" y="484.38" width="470.68" height="1" fill="#dcdcdc"/><rect x="0" y="500.00" width="470.68" height="1" fill="#dcdcdc"/><rect x="0.00" y="0" width="1" height="500" fill="#dcdcdc"/><rect x="67.24" y="0" width="1" height="500" fill="#dcdcdc"/><rect x="134.48" y="0" width="1" height="500" fill="#dcdcdc"/><rect x="201.72" y="0" width="1" height="500" fill="#dcdcdc"/><rect x="268.96" y="0" width="1" height="500" fill="#dcdcdc"/><rect x="336.20" y="0" width="1" height="500" fill="#dcdcdc"/><rect x="403.44" y="0" width="1" height="500" fill="#dcdcdc"/><rect x="470.68" y="0" width="1" height="500" fill="#dcdcdc"/></svg>
<svg style="left:749.2px;top:275.0px;" width="470.67999999999995" height="500" viewBox="0 0 470.67999999999995 500"><rect x="0" y="0.00" width="470.68" height="1" fill="#d6d6d6"/><rect x="0" y="15.62" width="470.68" height="1" fill="#d6d6d6"/><rect x="0" y="31.25" width="470.68" height="1" fill="#d6d6d6"/><rect x="0" y="46.88" width="470.68" height="1" fill="#d6d6d6"/><rect x="0" y="62.50" width="470.68" height="1" fill="#d6d6d6"/><rect x="0" y="78.12" width="470.68" height="1" fill="#d6d6d6"/><rect x="0" y="93.75" width="470.68" height="1" fill="#d6d6d6"/><rect x="0" y="109.38" width="470.68" height="1" fill="#d6d6d6"/><rect x="0" y="125.00" width="470.68" height="1" fill="#d6d6d6"/><rect x="0" y="140.62" width="470.68" height="1" fill="#d6d6d6"/><rect x="0" y="156.25" width="470.68" height="1" fill="#d6d6d6"/><rect x="0" y="171.88" width="470.68" height="1" fill="#d6d6d6"/><rect x="0" y="187.50" width="470.68" height="1" fill="#d6d6d6"/><rect x="0" y="203.12" width="470.68" height="1" fill="#d6d6d6"/><rect x="0" y="218.75" width="470.68" height="1" fill="#d6d6d6"/><rect x="0" y="234.38" width="470.68" height="1" fill="#d6d6d6"/><rect x="0" y="250.00" width="470.68" height="1" fill="#d6d6d6"/><rect x="0" y="265.62" width="470.68" height="1" fill="#d6d6d6"/><rect x="0" y="281.25" width="470.68" height="1" fill="#d6d6d6"/><rect x="0" y="296.88" width="470.68" height="1" fill="#d6d6d6"/><rect x="0" y="312.50" width="470.68" height="1" fill="#d6d6d6"/><rect x="0" y="328.12" width="470.68" height="1" fill="#d6d6d6"/><rect x="0" y="343.75" width="470.68" height="1" fill="#d6d6d6"/><rect x="0" y="359.38" width="470.68" height="1" fill="#d6d6d6"/><rect x="0" y="375.00" width="470.68" height="1" fill="#d6d6d6"/><rect x="0" y="390.62" width="470.68" height="1" fill="#d6d6d6"/><rect x="0" y="406.25" width="470.68" height="1" fill="#d6d6d6"/><rect x="0" y="421.88" width="470.68" height="1" fill="#d6d6d6"/><rect x="0" y="437.50" width="470.68" height="1" fill="#d6d6d6"/><rect x="0" y="453.12" width="470.68" height="1" fill="#d6d6d6"/><rect x="0" y="468.75" width="470.68" height="1" fill="#d6d6d6"/><rect x="0" y="484.38" width="470.68" height="1" fill="#d6d6d6"/><rect x="0" y="500.00" width="470.68" height="1" fill="#d6d6d6"/><rect x="0.00" y="0" width="1" height="500" fill="#d6d6d6"/><rect x="67.24" y="0" width="1" height="500" fill="#d6d6d6"/><rect x="134.48" y="0" width="1" height="500" fill="#d6d6d6"/><rect x="201.72" y="0" width="1" height="500" fill="#d6d6d6"/><rect x="268.96" y="0" width="1" height="500" fill="#d6d6d6"/><rect x="336.20" y="0" width="1" height="500" fill="#d6d6d6"/><rect x="403.44" y="0" width="1" height="500" fill="#d6d6d6"/><rect x="470.68" y="0" width="1" height="500" fill="#d6d6d6"/></svg>
<div class="a" style="left:1378px;top:275px;width:108px;height:500px;overflow:hidden">
<svg style="left:0;top:0" width="200" height="500"><rect x="0" y="0.00" width="200" height="1" fill="#d6d6d6"/><rect x="0" y="15.62" width="200" height="1" fill="#d6d6d6"/><rect x="0" y="31.25" width="200" height="1" fill="#d6d6d6"/><rect x="0" y="46.88" width="200" height="1" fill="#d6d6d6"/><rect x="0" y="62.50" width="200" height="1" fill="#d6d6d6"/><rect x="0" y="78.12" width="200" height="1" fill="#d6d6d6"/><rect x="0" y="93.75" width="200" height="1" fill="#d6d6d6"/><rect x="0" y="109.38" width="200" height="1" fill="#d6d6d6"/><rect x="0" y="125.00" width="200" height="1" fill="#d6d6d6"/><rect x="0" y="140.62" width="200" height="1" fill="#d6d6d6"/><rect x="0" y="156.25" width="200" height="1" fill="#d6d6d6"/><rect x="0" y="171.88" width="200" height="1" fill="#d6d6d6"/><rect x="0" y="187.50" width="200" height="1" fill="#d6d6d6"/><rect x="0" y="203.12" width="200" height="1" fill="#d6d6d6"/><rect x="0" y="218.75" width="200" height="1" fill="#d6d6d6"/><rect x="0" y="234.38" width="200" height="1" fill="#d6d6d6"/><rect x="0" y="250.00" width="200" height="1" fill="#d6d6d6"/><rect x="0" y="265.62" width="200" height="1" fill="#d6d6d6"/><rect x="0" y="281.25" width="200" height="1" fill="#d6d6d6"/><rect x="0" y="296.88" width="200" height="1" fill="#d6d6d6"/><rect x="0" y="312.50" width="200" height="1" fill="#d6d6d6"/><rect x="0" y="328.12" width="200" height="1" fill="#d6d6d6"/><rect x="0" y="343.75" width="200" height="1" fill="#d6d6d6"/><rect x="0" y="359.38" width="200" height="1" fill="#d6d6d6"/><rect x="0" y="375.00" width="200" height="1" fill="#d6d6d6"/><rect x="0" y="390.62" width="200" height="1" fill="#d6d6d6"/><rect x="0" y="406.25" width="200" height="1" fill="#d6d6d6"/><rect x="0" y="421.88" width="200" height="1" fill="#d6d6d6"/><rect x="0" y="437.50" width="200" height="1" fill="#d6d6d6"/><rect x="0" y="453.12" width="200" height="1" fill="#d6d6d6"/><rect x="0" y="468.75" width="200" height="1" fill="#d6d6d6"/><rect x="0" y="484.38" width="200" height="1" fill="#d6d6d6"/><rect x="0" y="500.00" width="200" height="1" fill="#d6d6d6"/><rect x="0.00" y="0" width="1" height="500" fill="#d6d6d6"/><rect x="67.24" y="0" width="1" height="500" fill="#d6d6d6"/><rect x="134.48" y="0" width="1" height="500" fill="#d6d6d6"/></svg>
</div>
<div class="t" style="left:121.00px;top:247.00px;font-size:10.3px;line-height:10.3px;color:#222;font-weight:normal;">8:58 a. m.</div>
<div class="t" style="left:359.00px;top:245.00px;font-size:10.8px;line-height:10.8px;color:#222;font-weight:normal;">Solvetic</div>
<div class="t" style="left:759.50px;top:288.00px;font-size:16.1px;line-height:16.1px;color:#a6a6a6;font-weight:normal;">Haga clic para agregar datos</div>
<div class="a" style="left:1378px;top:280px;width:108px;height:30px;overflow:hidden">
<div class="t" style="left:10px;top:8.37px;font-size:16.1px;line-height:16.1px;color:#a6a6a6">Haga clic para agregar datos</div>
</div>
<div class="a" style="left:388px;top:430px;width:70px;height:18px;background:none;border:2px solid #217346"></div>
<div class="a" style="left:455px;top:445px;width:5px;height:5px;background:#217346;border:1px solid #fff"></div>
<div class="a" style="left:1488px;top:160px;width:10px;height:615px;background:#fff;border-left:1px solid #d0d0d0"></div>
<div class="a" style="left:1488px;top:160px;width:10px;height:13px;background:#fff;border:1px solid #c8c8c8;border-right:0"></div>
<svg style="left:1492px;top:164px;" width="5" height="3" viewBox="0 0 5 3"><path d="M0 3 H5 L2.5 0 Z" fill="#555"/></svg>
<div class="a" style="left:1489px;top:746px;width:9px;height:18px;background:#dcdcdc;"></div>
<div class="a" style="left:1488px;top:764px;width:10px;height:11px;background:#fff;border:1px solid #c8c8c8;border-right:0"></div>
<svg style="left:1492px;top:768px;" width="5" height="3" viewBox="0 0 5 3"><path d="M0 0 H5 L2.5 3 Z" fill="#555"/></svg>
<div class="a" style="left:403px;top:123px;width:297px;height:131px;background:#fff;border:1px solid #c6c6c6;box-shadow:1px 1px 2px rgba(0,0,0,0.18)"></div>
<div class="t" style="left:412.00px;top:131.00px;font-size:9.3px;line-height:9.3px;color:#444;font-weight:bold;">Configurar página</div>
<div class="t" style="left:497.00px;top:148.00px;font-size:9.15px;line-height:9.15px;color:#555;font-weight:normal;">¿No encuentra lo que busca?</div>
<div class="t" style="left:497.00px;top:171.00px;font-size:9.2px;line-height:9.2px;color:#555;font-weight:normal;">Descubra todas las opciones de formato de</div>
<div class="t" style="left:497.00px;top:183.00px;font-size:9.2px;line-height:9.2px;color:#555;font-weight:normal;">página.</div>
<svg style="left:412px;top:145px;" width="75" height="80" viewBox="0 0 75 80"><rect x="0.5" y="0.5" width="74" height="79" fill="#f0f0f0" stroke="#7aa3e0" stroke-width="1"/><rect x="0" y="0" width="75" height="5" fill="#3d6fd1"/><rect x="66" y="1" width="4" height="3" fill="#9bb8ea"/><rect x="70.5" y="0.8" width="4" height="3.6" fill="#e8884a"/><rect x="2" y="5.5" width="71" height="4" fill="#f4efe4"/><rect x="4" y="6" width="10" height="3" fill="#fff" stroke="#bbb" stroke-width="0.3"/><rect x="38" y="6" width="12" height="3" fill="#fff" stroke="#bbb" stroke-width="0.3"/><rect x="2.5" y="10.5" width="70" height="17" fill="#f7f7f7" stroke="#ddd" stroke-width="0.4"/><rect x="3" y="11" width="8" height="1.2" fill="#7aa0d8"/><rect x="5" y="13.5" width="6" height="7" fill="#fff" stroke="#888" stroke-width="0.6"/><path d="M6.5 19 L8 15 L9.5 19" fill="none" stroke="#555" stroke-width="0.6"/><rect x="14" y="15" width="5" height="1.2" fill="#7ab07a"/><rect x="43" y="15" width="12" height="1.2" fill="#999"/><rect x="3" y="29" width="7" height="1.2" fill="#7aa0d8"/><rect x="2.5" y="30.5" width="70" height="11" fill="#f4f4f4" stroke="#ddd" stroke-width="0.4"/><circle cx="5.5" cy="33.8" r="1" fill="#5a5"/><rect x="8" y="33" width="10" height="1.2" fill="#888"/><rect x="21" y="32.3" width="5" height="2.6" fill="#fff" stroke="#999" stroke-width="0.3"/><rect x="26" y="32.3" width="1.5" height="2.6" fill="#6a9ad8"/><rect x="29" y="33" width="12" height="1.2" fill="#888"/><circle cx="5.5" cy="38" r="1" fill="none" stroke="#999" stroke-width="0.4"/><rect x="8" y="37.3" width="6" height="1.2" fill="#888"/><rect x="21" y="36.5" width="6" height="2.6" fill="#fff" stroke="#999" stroke-width="0.3"/><rect x="27" y="36.5" width="1.5" height="2.6" fill="#6a9ad8"/><rect x="30" y="37.3" width="12" height="1.2" fill="#888"/><rect x="44" y="36.5" width="8" height="2.6" fill="#fff" stroke="#999" stroke-width="0.3"/><rect x="51" y="36.5" width="1.5" height="2.6" fill="#6a9ad8"/><rect x="54" y="37.3" width="3" height="1.2" fill="#888"/><rect x="3" y="46.3" width="9" height="1.2" fill="#888"/><rect x="15" y="45" width="58" height="3" fill="#fff" stroke="#bbb" stroke-width="0.3"/><rect x="71" y="45" width="2" height="3" fill="#6a9ad8"/><rect x="17" y="46" width="6" height="1" fill="#999"/><rect x="3" y="50.3" width="9" height="1.2" fill="#888"/><rect x="15" y="49" width="58" height="3" fill="#fff" stroke="#bbb" stroke-width="0.3"/><rect x="71" y="49" width="2" height="3" fill="#6a9ad8"/><rect x="17" y="50" width="6" height="1" fill="#999"/><rect x="3" y="55.5" width="14" height="1.2" fill="#888"/><rect x="19" y="54" width="16" height="3" fill="#fff" stroke="#ccc" stroke-width="0.3"/><rect x="27" y="67.5" width="13" height="4" rx="1" fill="#f6f6f6" stroke="#999" stroke-width="0.5"/><rect x="42" y="67.5" width="14" height="4" rx="1" fill="#f6f6f6" stroke="#999" stroke-width="0.5"/><rect x="58" y="67.5" width="13" height="4" rx="1" fill="#f6f6f6" stroke="#999" stroke-width="0.5"/><rect x="31" y="69" width="5" height="1" fill="#888"/><rect x="45" y="69" width="8" height="1" fill="#888"/><rect x="61" y="69" width="6" height="1" fill="#888"/><rect x="1" y="73" width="73" height="6.5" fill="#ede4d4"/><rect x="45" y="74" width="13" height="4.5" rx="1" fill="#f6f6f6" stroke="#6a8ad0" stroke-width="0.6"/><rect x="60" y="74" width="12" height="4.5" rx="1" fill="#f6f6f6" stroke="#999" stroke-width="0.5"/><rect x="50" y="75.8" width="3" height="1" fill="#777"/><rect x="63" y="75.8" width="6" height="1" fill="#777"/></svg>
<svg style="left:400px;top:115px;" width="60" height="60" viewBox="0 0 60 60"><path d="M12 5 L12 38 L20 31.5 L38 55 L53.5 43 L35.5 19.5 L45.5 13 Z" fill="#e8393c" stroke="#262626" stroke-width="2.2" stroke-linejoin="round"/></svg>
<div class="a" style="left:0px;top:774px;width:1500px;height:23px;background:#e6e6e6;border-top:2px solid #c8c8c8"></div>
<div class="a" style="left:79px;top:774px;width:47px;height:20px;background:#fff;border-left:1px solid #c8c8c8;border-right:1px solid #c8c8c8;border-top:0"></div>
<div class="a" style="left:79px;top:792px;width:47px;height:2px;background:#217346;"></div>
<div class="t" style="left:88.50px;top:781.00px;font-size:10px;line-height:10px;color:#217346;font-weight:bold;-webkit-text-stroke:0">Hoja1</div>
<div class="a" style="left:0px;top:796px;width:1500px;height:17px;background:#f3f3f3;border-top:1px solid #d4d4d4"></div>
<div class="t" style="left:7.00px;top:802.00px;font-size:9.3px;line-height:9.3px;color:#262626;font-weight:normal;">Listo</div>
<svg style="left:22px;top:781px;" width="5" height="9" viewBox="0 0 5 9"><path d="M4 1 L1 4.5 L4 8" fill="none" stroke="#b8b8b8" stroke-width="1"/></svg>
<svg style="left:45px;top:781px;" width="5" height="9" viewBox="0 0 5 9"><path d="M1 1 L4 4.5 L1 8" fill="none" stroke="#b8b8b8" stroke-width="1"/></svg>
<svg style="left:151px;top:779px;" width="13" height="13" viewBox="0 0 13 13"><circle cx="6.5" cy="6.5" r="5.8" fill="none" stroke="#b8b8b8" stroke-width="1"/><path d="M6.5 3.5 V9.5 M3.5 6.5 H9.5" stroke="#b8b8b8" stroke-width="1"/></svg>
<div class="a" style="left:903px;top:782px;width:1px;height:1.2px;background:#888;"></div>
<div class="a" style="left:903px;top:785.5px;width:1px;height:1.2px;background:#888;"></div>
<div class="a" style="left:903px;top:789px;width:1px;height:1.2px;background:#888;"></div>
<div class="a" style="left:915px;top:780px;width:12px;height:12px;background:#fff;border:1px solid #b8b8b8"></div>
<svg style="left:919px;top:783px;" width="4" height="6" viewBox="0 0 4 6"><path d="M4 0 V6 L0 3 Z" fill="#444"/></svg>
<div class="a" style="left:927px;top:780px;width:514px;height:12px;background:#fff;border:1px solid #b8b8b8"></div>
<div class="a" style="left:1475px;top:780px;width:12px;height:12px;background:#fff;border:1px solid #d8d8d8"></div>
<svg style="left:1479px;top:783px;" width="4" height="6" viewBox="0 0 4 6"><path d="M0 0 V6 L4 3 Z" fill="#777"/></svg>
<svg style="left:41px;top:799px;" width="10" height="11" viewBox="0 0 10 11"><circle cx="2" cy="2" r="1.6" fill="#666"/><rect x="4" y="1" width="5.5" height="2" fill="#666"/><rect x="0.5" y="4.5" width="9" height="6" fill="none" stroke="#777" stroke-width="0.8"/><path d="M2.5 10 V7 M4.5 10 V6 M6.5 10 V7.5 M8.5 10 V6.5" stroke="#777" stroke-width="0.8"/></svg>
<svg style="left:1278px;top:799px;" width="11" height="11" viewBox="0 0 11 11"><rect x="0.5" y="0.5" width="10" height="10" fill="#fff" stroke="#666" stroke-width="0.9"/><path d="M0.5 3.8 H10.5 M0.5 7.2 H10.5 M3.8 0.5 V10.5 M7.2 0.5 V10.5" stroke="#666" stroke-width="0.9"/></svg>
<div class="a" style="left:1300px;top:797px;width:30px;height:15px;background:#c8c8c8;"></div>
<svg style="left:1310px;top:799px;" width="11" height="11" viewBox="0 0 11 11"><rect x="0.5" y="0.5" width="10" height="10" fill="none" stroke="#5a8aa0" stroke-width="0.9"/><rect x="2.5" y="2" width="6" height="7" fill="none" stroke="#5a8aa0" stroke-width="0.9"/><path d="M5.5 2 V9" stroke="#777" stroke-width="0.8"/></svg>
<svg style="left:1341px;top:799px;" width="11" height="11" viewBox="0 0 11 11"><rect x="0.5" y="0.5" width="10" height="10" fill="none" stroke="#5a8aa0" stroke-width="0.9"/><path d="M0.5 6 H10.5 M3.5 0.5 V6 M7 0.5 V6" stroke="#5a8aa0" stroke-width="0.9"/></svg>
<div class="a" style="left:1367px;top:804px;width:6px;height:1px;background:#555;"></div>
<div class="a" style="left:1377px;top:805px;width:78px;height:1px;background:#b0b0b0;"></div>
<div class="a" style="left:1415px;top:800px;width:3px;height:10px;background:#444;"></div>
<svg style="left:1459px;top:801px;" width="7" height="7" viewBox="0 0 7 7"><path d="M3.5 0 V7 M0 3.5 H7" stroke="#555" stroke-width="1"/></svg>
<div class="t" style="left:1496.00px;top:802.00px;font-size:9.3px;line-height:9.3px;color:#333;font-weight:normal;transform:translateX(-100%);">100%</div>
<svg style="left:1444px;top:757px;" width="52" height="52" viewBox="0 0 52 52"><circle cx="26.2" cy="24" r="24.8" fill="rgba(255,255,255,0.55)" stroke="rgba(215,222,230,0.8)" stroke-width="0.8"/><path d="M25.5 33.3 C22 29 13 26 10.5 20 C8 13 13 3 22 2.3 C31 1.7 38 6 38.2 14 C38.5 21 34 27 34 31 C33.5 34 28 36 27 38.3 C26 40.5 36 36 40 37.5 C42 39 35 43 30 45.7" fill="none" stroke="#6a9ad0" stroke-width="1.7" stroke-linecap="round"/></svg>
<div class="a" style="left:0px;top:0px;width:1500px;height:1px;background:#000;"></div>
<div class="a" style="left:0px;top:812px;width:1500px;height:1px;background:#000;"></div>
<div class="a" style="left:0px;top:0px;width:1px;height:813px;background:#fff;"></div>
<div class="a" style="left:1px;top:0px;width:1px;height:813px;background:#000;"></div>
<div class="a" style="left:1498px;top:0px;width:1px;height:813px;background:#000;"></div>
<div class="a" style="left:1499px;top:0px;width:1px;height:813px;background:#fff;"></div>
</body></html>
